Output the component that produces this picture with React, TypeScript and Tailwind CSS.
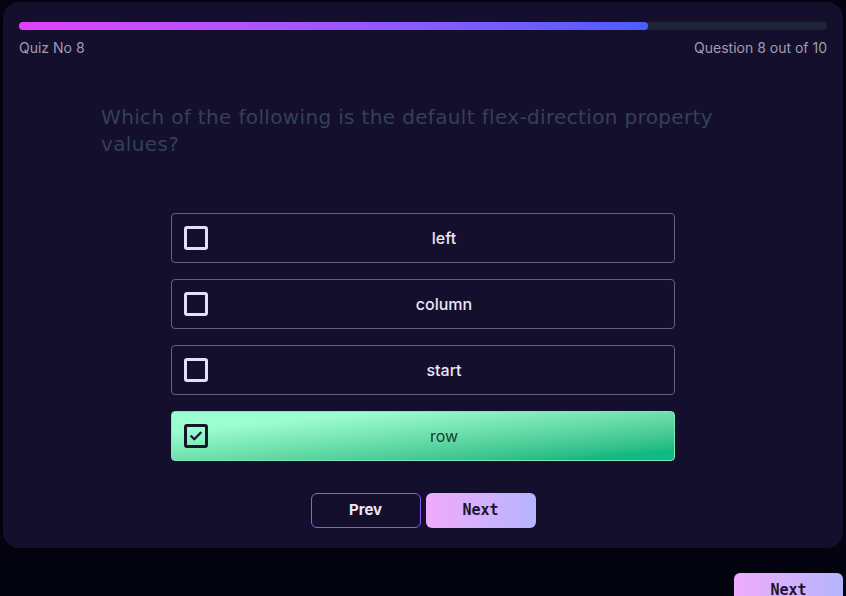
import React, { useState } from 'react';

const options = ['left', 'column', 'start', 'row'];

const CheckBox: React.FC<{ checked: boolean }> = ({ checked }) => (
  <span
    className={
      checked
        ? 'flex h-[24px] w-[24px] shrink-0 items-center justify-center rounded-[3px] border-[3px] border-[#111827]'
        : 'flex h-[24px] w-[24px] shrink-0 items-center justify-center rounded-[3px] border-[3px] border-[#e9defa]'
    }
  >
    {checked && (
      <svg width="14" height="14" viewBox="0 0 24 24" fill="none" stroke="#111827" strokeWidth="4" strokeLinecap="round" strokeLinejoin="round">
        <path d="M4 12.5l5 5L20 6.5" />
      </svg>
    )}
  </span>
);

const App: React.FC = () => {
  const [selected, setSelected] = useState(3);

  return (
    <div className="min-h-screen bg-[#03040f] px-[3px] pt-[2px] font-['Inter',sans-serif]">
      <section className="rounded-[16px] bg-[#140f2d] px-4 pt-5 pb-5">
        <div className="h-2 w-full rounded-full bg-[#1e2538]">
          <div className="h-2 w-[77.8%] rounded-full bg-linear-to-r from-[#e040fb] to-[#4c5cff]" />
        </div>
        <div className="mt-2 flex justify-between text-[14px] leading-[20px] text-[#a19db1]">
          <span>Quiz No 8</span>
          <span>Question 8 out of 10</span>
        </div>

        <h2 className="mx-auto mt-[46px] max-w-[644px] font-['DejaVu_Sans',sans-serif] text-[20px] leading-[27px] tracking-[0.35px] text-[#334155]">
          Which of the following is the default flex-direction property values?
        </h2>

        <div className="mx-auto mt-[55px] flex w-[504px] flex-col gap-4">
          {options.map((opt, i) => {
            const active = selected === i;
            return (
              <button
                key={opt}
                type="button"
                onClick={() => setSelected(i)}
                className={
                  active
                    ? 'flex h-[50px] items-center rounded-[4px] border border-[#7ce8b8] bg-linear-to-br from-[#9cfdd0] from-20% to-[#10b981] to-90% pl-3'
                    : 'flex h-[50px] items-center rounded-[4px] border border-[#676179] pl-3'
                }
              >
                <CheckBox checked={active} />
                <span
                  className={
                    active
                      ? 'flex-1 pl-[6px] text-center text-[16px] text-[#1c3b33]'
                      : 'flex-1 pl-[6px] text-center text-[16px] font-medium text-[#ece6f7]'
                  }
                >
                  {opt}
                </span>
              </button>
            );
          })}
        </div>

        <div className="mt-8 flex justify-center gap-[5px]">
          <button
            type="button"
            className="h-[35px] w-[110px] rounded-[6px] border border-[#8b5cf6] text-[15px] font-bold text-[#ebe6f5]"
          >
            Prev
          </button>
          <button
            type="button"
            className="h-[35px] w-[110px] rounded-[6px] bg-linear-to-r from-[#f0abfc] to-[#b4b4fd] font-['DejaVu_Sans_Mono',monospace] text-[15px] font-bold text-[#1c1530]"
          >
            Next
          </button>
        </div>
      </section>

      <div className="mt-[25px] flex justify-end">
        <button
          type="button"
          className="h-[35px] w-[109px] rounded-[6px] bg-linear-to-r from-[#f0abfc] to-[#b4b4fd] font-['DejaVu_Sans_Mono',monospace] text-[15px] font-bold text-[#1c1530]"
        >
          Next
        </button>
      </div>
    </div>
  );
};

export default App;
